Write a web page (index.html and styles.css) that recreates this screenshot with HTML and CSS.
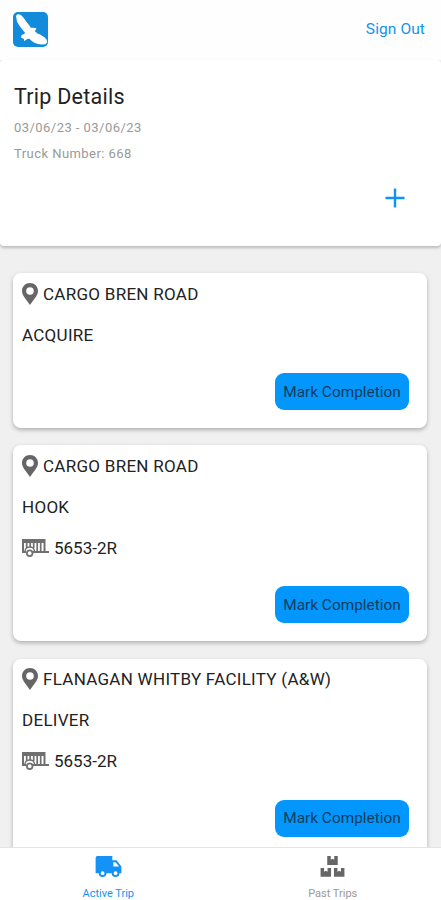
FILE: index.html
```html
<!DOCTYPE html>
<html lang="en">
<head>
  <meta charset="UTF-8">
  <meta name="viewport" content="width=device-width, initial-scale=1.0">
  <title>Trip Details</title>
  <link rel="stylesheet" href="styles.css">
</head>
<body>
<svg class="icon-defs">
  <symbol id="pin" viewBox="0 0 16 22">
    <path fill-rule="evenodd" d="M8 0C3.500 0 0 3.500 0 8c0 5.200 5.500 9.800 8 14 2.500-4.200 8-8.800 8-14 0-4.500-3.500-8-8-8zm0 4.200a3.800 3.800 0 1 1 0 7.600 3.800 3.800 0 0 1 0-7.600z"/>
  </symbol>
  <symbol id="trailer" viewBox="0 0 27 18">
    <path d="M1 13V1h21.500v12M0 13h4M11 13h16M1 3h21" fill="none" stroke="currentColor" stroke-width="2"/>
    <path d="M4.700 1v8M8.200 1v7M11.700 1v8M15.200 1v11M18.700 1v11" fill="none" stroke="currentColor" stroke-width="1.700"/>
    <path d="M3 12.500c0-6 9.500-6 9.500 0" fill="none" stroke="currentColor" stroke-width="1.400"/>
    <circle cx="7.700" cy="14.200" r="2.800" fill="#fff" stroke="currentColor" stroke-width="1.800"/>
  </symbol>
</svg>

<header class="header">
  <svg class="logo" viewBox="0 0 35 35">
    <rect width="35" height="35" rx="5" fill="#128bdb"/>
    <path fill="#fff" d="M3 4C4 1.500 6.500 1.800 8.500 3.500c3 2.800 4.800 6.500 7.500 9.500l2 3c1.300-.5 2.500-.5 5.500.3L22 19c.3 1 1.300 1.700 2.500 2.400 3.500 1.300 7 3.100 9 6.100l.8 2.500-1.800 2.300-4 .2c-5-.4-8.500-2-12-5.500-1-.5-2.500 0-3.500 1L11 29l0-2-3-1.500.5-2.300c1.500-1.200 3-.7 3.500-2.400C9 17 5.500 13 4 9.500z"/>
  </svg>
  <a href="#" class="sign-out">Sign Out</a>
</header>

<section class="trip">
  <h1>Trip Details</h1>
  <p class="dates">03/06/23 - 03/06/23</p>
  <p>Truck Number: 668</p>
  <button class="add-btn" aria-label="Add">
    <svg viewBox="0 0 20 20"><path d="M10 .5v19M.5 10h19" stroke="currentColor" stroke-width="2.400"/></svg>
  </button>
</section>

<main class="stops">
  <div class="card">
    <div class="row"><svg class="pin"><use href="#pin"/></svg><span>CARGO BREN ROAD</span></div>
    <div class="row">ACQUIRE</div>
    <button class="complete-btn">Mark Completion</button>
  </div>
  <div class="card">
    <div class="row"><svg class="pin"><use href="#pin"/></svg><span>CARGO BREN ROAD</span></div>
    <div class="row">HOOK</div>
    <div class="row unit"><svg class="trailer"><use href="#trailer"/></svg><span>5653-2R</span></div>
    <button class="complete-btn">Mark Completion</button>
  </div>
  <div class="card">
    <div class="row"><svg class="pin"><use href="#pin"/></svg><span>FLANAGAN WHITBY FACILITY (A&amp;W)</span></div>
    <div class="row">DELIVER</div>
    <div class="row unit"><svg class="trailer"><use href="#trailer"/></svg><span>5653-2R</span></div>
    <button class="complete-btn">Mark Completion</button>
  </div>
</main>

<nav class="tabs">
  <a href="#" class="tab active">
    <svg class="truck-icon" viewBox="0 0 27 22">
      <path fill="currentColor" fill-rule="evenodd" d="M2 0h15.500v4.500h4.500l5 6.500v7h-2.200a4 4 0 0 1-7.800 0h-5.800a4 4 0 0 1-7.800 0H0V2a2 2 0 0 1 2-2zM18.500 6.500V11h6L21 6.500z"/>
      <circle cx="7.300" cy="18" r="3" fill="#fff" stroke="currentColor" stroke-width="2"/>
      <circle cx="20.900" cy="18" r="3" fill="#fff" stroke="currentColor" stroke-width="2"/>
    </svg>
    <span>Active Trip</span>
  </a>
  <a href="#" class="tab">
    <svg class="boxes-icon" viewBox="0 0 25 22">
      <path fill="currentColor" d="M7 0h3.700v4l1.800-1 1.800 1V0H18v9.300H7zM0 12.500h3.700v4l1.800-1 1.800 1v-4H11v9.300H0zM14 12.500h3.700v4l1.800-1 1.800 1v-4H25v9.300H14z"/>
    </svg>
    <span>Past Trips</span>
  </a>
</nav>
</body>
</html>
```
FILE: styles.css
```css
* {
  box-sizing: border-box;
}
body {
  display: flex;
  flex-direction: column;
  height: 100vh;
  margin: 0;
  overflow: hidden;
  font-family: Roboto, sans-serif;
  background-color: #f0f0f0;
  color: #222;
}
a {
  text-decoration: none;
}
button {
  font-family: inherit;
  border: none;
  padding: 0;
}
.icon-defs {
  position: absolute;
  width: 0;
  height: 0;
}
.header {
  display: flex;
  flex: none;
  align-items: center;
  justify-content: space-between;
  height: 60px;
  padding: 0 16px 2px 13px;
  background-color: #fefefe;
}
.logo {
  width: 35px;
  height: 35px;
}
.sign-out {
  color: #1592ee;
  font-size: 15.5px;
  letter-spacing: 0.1px;
}
.trip {
  display: flex;
  flex: none;
  flex-direction: column;
  height: 186px;
  padding: 23px 36px 0 14px;
  background-color: #fff;
  border-radius: 4px;
  box-shadow: 0 2px 3px rgba(0, 0, 0, 0.22);
}
.trip h1 {
  margin: 0;
  font-size: 21.5px;
  font-weight: 400;
  line-height: 28px;
  letter-spacing: 0.25px;
}
.trip p {
  margin: 0;
  color: #999;
  font-size: 13px;
  line-height: 26px;
  letter-spacing: 0.45px;
}
.trip .dates {
  margin-top: 4px;
}
.add-btn {
  align-self: flex-end;
  width: 20px;
  height: 20px;
  margin-top: 21px;
  background: none;
  color: #0f92f5;
}
.add-btn svg {
  display: block;
}
.stops {
  display: flex;
  flex: 1;
  flex-direction: column;
  gap: 17.4px;
  min-height: 0;
  padding: 27px 14px 0 13px;
  overflow: hidden;
}
.card {
  display: flex;
  flex: none;
  flex-direction: column;
  padding: 0 18px 18px 9px;
  background-color: #fff;
  border-radius: 8px;
  box-shadow: 0 2px 4px rgba(0, 0, 0, 0.27);
}
.row {
  display: flex;
  align-items: center;
  height: 41px;
  font-size: 17px;
  letter-spacing: 0.28px;
}
.unit {
  letter-spacing: 0;
}
.pin {
  width: 16px;
  height: 22px;
  margin-right: 5px;
  fill: #666;
}
.trailer {
  width: 27px;
  height: 18px;
  margin-right: 5px;
  color: #707070;
}
.complete-btn {
  align-self: flex-end;
  width: 134px;
  height: 37px;
  margin-top: 18px;
  background-color: #0396fd;
  border-radius: 9px;
  color: #123c5c;
  font-size: 15.4px;
}
.tabs {
  display: flex;
  flex: none;
  gap: 8px;
  height: 53px;
  background-color: #fff;
  border-top: 1px solid #e4e4e4;
}
.tab {
  display: flex;
  flex: 1;
  flex-direction: column;
  align-items: center;
  padding-top: 8px;
  color: #666;
  font-size: 11px;
}
.tab span {
  margin-top: 10px;
  line-height: 13px;
  color: #999;
}
.active,
.active span {
  color: #1592f5;
}
.truck-icon {
  width: 27px;
  height: 22px;
}
.boxes-icon {
  width: 25px;
  height: 22px;
}
```
